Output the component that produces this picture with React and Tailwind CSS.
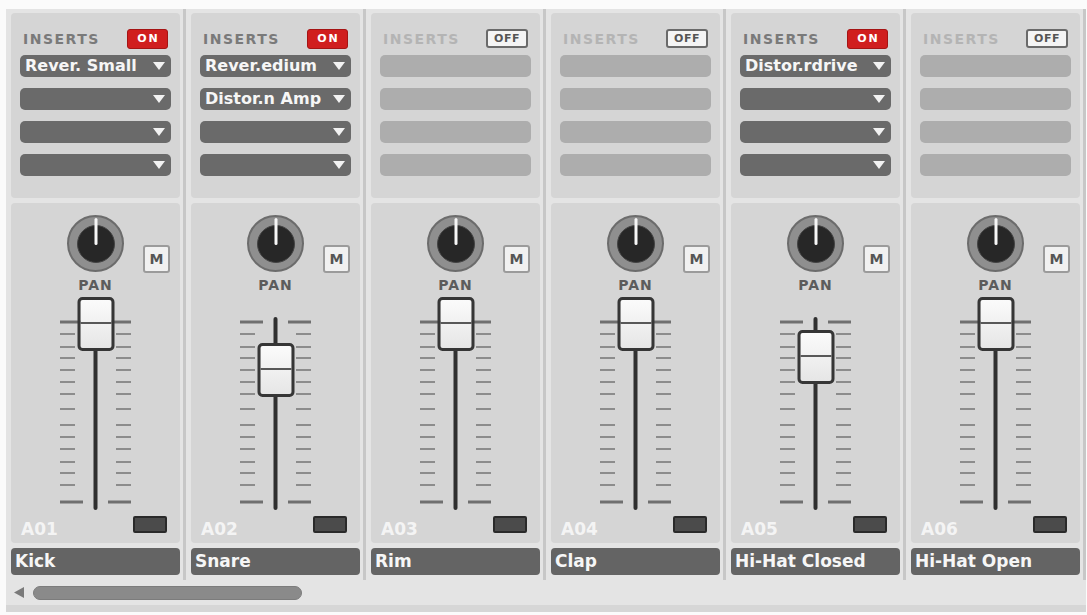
import React from "react";

const channels = [
  { id: "A01", name: "Kick", on: true, inserts: ["Rever. Small", "", "", ""], fader: 0 },
  { id: "A02", name: "Snare", on: true, inserts: ["Rever.edium", "Distor.n Amp", "", ""], fader: 46 },
  { id: "A03", name: "Rim", on: false, inserts: ["", "", "", ""], fader: 0 },
  { id: "A04", name: "Clap", on: false, inserts: ["", "", "", ""], fader: 0 },
  { id: "A05", name: "Hi-Hat Closed", on: true, inserts: ["Distor.rdrive", "", "", ""], fader: 33 },
  { id: "A06", name: "Hi-Hat Open", on: false, inserts: ["", "", "", ""], fader: 0 },
];

const ticks = [25, 37, 50, 61, 73, 85, 97, 112, 128, 140, 152, 165, 176, 188, 205];

function Triangle() {
  return (
    <svg width="12" height="8" viewBox="0 0 12 8" className="shrink-0">
      <polygon points="0,0 12,0 6,8" fill="#f2f2f2" />
    </svg>
  );
}

function Dropdown({ label, on }) {
  if (!on) {
    return <div className="h-[22px] rounded-[5px] bg-[#adadad]" />;
  }
  return (
    <div className="flex h-[22px] items-center justify-between gap-[2px] rounded-[5px] bg-[#6a6a6a] pl-[5px] pr-[6px]">
      <span className="shrink-0 whitespace-nowrap text-[16px] font-bold leading-[20px] text-[#f6f6f6]">{label}</span>
      <Triangle />
    </div>
  );
}

function Badge({ on }) {
  if (on) {
    return (
      <div className="flex h-[20px] w-[41px] items-center justify-center rounded-[3px] border border-[#a51414] bg-[#d01e1e] pl-[2px] text-[11px] font-bold leading-none tracking-[2px] text-white">
        ON
      </div>
    );
  }
  return (
    <div className="flex h-[19px] w-[42px] items-center justify-center rounded-[3px] border-[2px] border-[#6a6a6a] bg-[#f4f4f4] text-[11px] font-bold leading-none tracking-[0.5px] text-[#555]">
      OFF
    </div>
  );
}

function Knob() {
  return (
    <div className="relative flex h-[57px] w-[57px] items-center justify-center rounded-full border-[2px] border-[#6c6c6c] bg-[#8f8f8f]">
      <div className="h-[38px] w-[38px] rounded-full border border-[#444] bg-[#272727]" />
      <div className="absolute left-1/2 top-[1px] h-[27px] w-[3px] -translate-x-1/2 rounded-full bg-[#f7f7f7]" />
    </div>
  );
}

function FaderScale() {
  return (
    <svg width="169" height="216" viewBox="0 0 169 216" className="block">
      {ticks.map((y, i) => {
        const long = i === 0 || i === ticks.length - 1;
        return (
          <g key={y}>
            <line
              x1="49"
              x2={long ? 72 : 64}
              y1={y}
              y2={y}
              stroke={long ? "#6f6f6f" : "#8c8c8c"}
              strokeWidth={long ? 3 : 2}
            />
            <line
              x1={long ? 97 : 105}
              x2="120"
              y1={y}
              y2={y}
              stroke={long ? "#6f6f6f" : "#8c8c8c"}
              strokeWidth={long ? 3 : 2}
            />
          </g>
        );
      })}
      <rect x="82.5" y="20" width="4" height="193" rx="2" fill="#303030" />
    </svg>
  );
}

function Channel({ ch }) {
  return (
    <div className="flex w-[180px] shrink-0">
      <div className="w-[177px] pl-[5px] pr-[3px] pt-[4px] pb-[5px]">
        {/* Inserts */}
        <div className="h-[185px] rounded-[4px] bg-[#d5d5d5] pt-[16px]">
          <div className="flex h-[19px] items-center justify-between pl-[12px] pr-[12px]">
            <span
              className={
                ch.on
                  ? "text-[14px] font-bold leading-none tracking-[1.5px] text-[#7a7a7a]"
                  : "text-[14px] font-bold leading-none tracking-[1.5px] text-[#b4b4b4]"
              }
            >
              INSERTS
            </span>
            <Badge on={ch.on} />
          </div>
          <div className="mt-[7px] flex flex-col gap-[11px] px-[9px]">
            {ch.inserts.map((ins, i) => (
              <Dropdown key={i} label={ins} on={ch.on} />
            ))}
          </div>
        </div>

        {/* Fader section */}
        <div className="mt-[5px] flex h-[340px] flex-col rounded-[4px] bg-[#d5d5d5] pt-[12px]">
          <div className="grid h-[57px] grid-cols-[1fr_57px_1fr]">
            <div />
            <Knob />
            <div className="pl-[19px] pt-[30px]">
              <div className="flex h-[28px] w-[27px] items-center justify-center rounded-[3px] border-[2px] border-[#9b9b9b] bg-[#f1f1f1] text-[14px] font-bold leading-none text-[#555]">
                M
              </div>
            </div>
          </div>
          <div className="mt-[6px] text-center text-[14px] font-bold leading-[14px] tracking-[1px] text-[#5c5c5c]">PAN</div>
          <div className="relative mt-[5px] h-[216px]">
            <FaderScale />
            <div
              className="absolute left-1/2 h-[54px] w-[37px] -translate-x-1/2 rounded-[5px] border-[3px] border-[#363636] bg-gradient-to-b from-[#fbfbfb] to-[#e6e6e6]"
              style={{ top: ch.fader }}
            >
              <div className="absolute left-0 right-0 top-[22px] h-[2px] bg-[#585858]" />
            </div>
          </div>
          <div className="mt-[3px] flex h-[22px] items-start justify-between pl-[10px] pr-[13px]">
            <span className="pt-[2px] text-[17px] font-bold leading-[22px] text-[#f4f4f4]">{ch.id}</span>
            <div className="h-[17px] w-[34px] rounded-[2px] border-[2px] border-[#2a2a2a] bg-[#4b4b4b]" />
          </div>
        </div>

        {/* Name */}
        <div className="mt-[5px] flex h-[27px] items-center rounded-[4px] bg-[#646464] pl-[4px]">
          <span className="whitespace-nowrap text-[17px] font-bold leading-none text-[#f6f6f6]">{ch.name}</span>
        </div>
      </div>
      <div className="w-[3px] bg-[#c7c7c7]" />
    </div>
  );
}

export default function App() {
  return (
    <div className="h-[615px] w-[1087px] overflow-hidden bg-[#fbfbfb] pl-[6px] pt-[9px] font-['DejaVu_Sans',sans-serif]">
      <div className="w-[1080px] bg-[#e4e4e4]">
        <div className="flex">
          {channels.map((ch) => (
            <Channel key={ch.id} ch={ch} />
          ))}
        </div>
        <div className="flex h-[25px] items-center pl-[7px]">
          <svg width="12" height="11" viewBox="0 0 12 11" className="shrink-0">
            <polygon points="11,0 11,11 1,5.5" fill="#7a7a7a" />
          </svg>
          <div className="ml-[8px] h-[14px] w-[269px] rounded-full border border-[#7c7c7c] bg-[#8a8a8a]" />
        </div>
        <div className="h-[7px] bg-[#d6d6d6]" />
      </div>
    </div>
  );
}
